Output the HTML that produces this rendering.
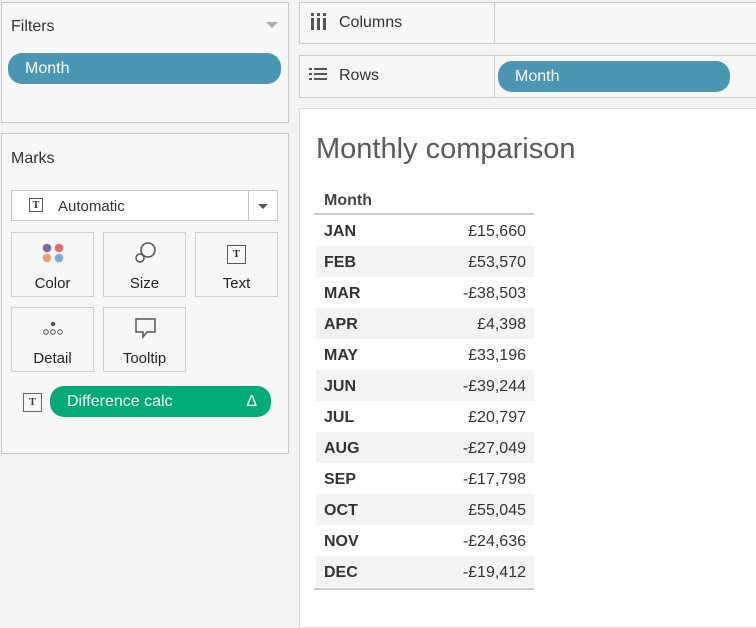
<!DOCTYPE html><html><head><style>
body{margin:0;width:756px;height:625px;background:#f3f3f3;font-family:"Liberation Sans",sans-serif;position:relative;overflow:hidden;color:#333}
.a{position:absolute;box-sizing:border-box}
.box{border:1px solid #c9c9c9;background:#f7f7f7}
.pill{border-radius:14px;color:#fff;font-size:16px;line-height:28px;padding-left:17px}
.card{border:1px solid #cfcfcf;background:#f7f7f7;width:83px;height:65px;text-align:center;font-size:15px;color:#222}
.card span{position:absolute;left:0;right:0;top:42px}
.tr{position:absolute;left:316px;width:218px;height:31px;font-size:16px;color:#333;line-height:33px}
.tr b{position:absolute;left:8px;color:#333;font-weight:600}
.tr i{font-style:normal;position:absolute;right:8px}
.s{background:#f3f3f3}
.ti{position:absolute;border:1.5px solid #555;width:14px;height:14px;font:bold 10px "Liberation Serif",serif;text-align:center;line-height:14px;box-sizing:border-box}
</style></head><body>
<div class="a box" style="left:1px;top:2px;width:288px;height:121px"></div>
<div class="a" style="left:11px;top:18px;font-size:16px">Filters</div>
<div class="a" style="left:266px;top:22px;border:6px solid transparent;border-top:6px solid #aaa"></div>
<div class="a pill" style="left:8px;top:53px;width:273px;height:31px;background:#4a96b3;line-height:32px">Month</div>

<div class="a box" style="left:1px;top:133px;width:288px;height:321px"></div>
<div class="a" style="left:11px;top:150px;font-size:16px">Marks</div>
<div class="a" style="left:11px;top:190px;width:267px;height:31px;border:1px solid #c6c6c6;background:#fff"></div>
<div class="a" style="left:248px;top:190px;width:1px;height:31px;background:#c6c6c6"></div>
<div class="a" style="left:258px;top:204px;border:5px solid transparent;border-top:5px solid #555"></div>
<div class="ti" style="left:29px;top:198px">T</div>
<div class="a" style="left:58px;top:198px;font-size:15px">Automatic</div>

<div class="a card" style="left:11px;top:232px"><svg width="30" height="30" style="margin-top:6px"><circle cx="9" cy="9" r="4.3" fill="#7f6b9b"/><circle cx="21" cy="9" r="4.3" fill="#e8686e"/><circle cx="9" cy="19" r="4.3" fill="#eba074"/><circle cx="21" cy="19" r="4.3" fill="#7ea8d6"/></svg><span>Color</span></div>
<div class="a card" style="left:103px;top:232px"><svg width="30" height="30" style="margin-top:6px"><circle cx="18" cy="11" r="7" fill="none" stroke="#555" stroke-width="1.5"/><circle cx="10" cy="19" r="4" fill="#fff" stroke="#555" stroke-width="1.5"/></svg><span>Size</span></div>
<div class="a card" style="left:195px;top:232px"><div class="ti" style="left:31px;top:12px;width:19px;height:19px;line-height:17px">T</div><span>Text</span></div>
<div class="a card" style="left:11px;top:307px"><svg width="30" height="30" style="margin-top:6px"><circle cx="15" cy="10" r="2.2" fill="#555"/><circle cx="8" cy="18" r="2.3" fill="none" stroke="#555"/><circle cx="15" cy="18" r="2.3" fill="none" stroke="#555"/><circle cx="22" cy="18" r="2.3" fill="none" stroke="#555"/></svg><span>Detail</span></div>
<div class="a card" style="left:103px;top:307px"><svg width="30" height="30" style="margin-top:6px"><path d="M6 5H25V18H17L13 23V18H6Z" fill="none" stroke="#555" stroke-width="1.5"/></svg><span>Tooltip</span></div>
<div class="ti" style="left:23px;top:393px;width:19px;height:19px;line-height:17px;border-color:#666">T</div>
<div class="a pill" style="left:50px;top:386px;width:221px;height:31px;background:#00ab75;line-height:32px">Difference calc<span style="position:absolute;right:14px">Δ</span></div>

<div class="a box" style="left:299px;top:2px;width:460px;height:42px"></div>
<div class="a" style="left:494px;top:2px;width:1px;height:42px;background:#ccc"></div>
<svg class="a" style="left:310px;top:13px" width="22" height="18"><g fill="#555"><rect x="1" y="0" width="3" height="3"/><rect x="7" y="0" width="3" height="3"/><rect x="13" y="0" width="3" height="3"/><rect x="1" y="5" width="3" height="12"/><rect x="7" y="5" width="3" height="12"/><rect x="13" y="5" width="3" height="12"/></g></svg>
<div class="a" style="left:339px;top:14px;font-size:16px">Columns</div>
<div class="a box" style="left:299px;top:55px;width:460px;height:43px"></div>
<div class="a" style="left:494px;top:55px;width:1px;height:43px;background:#ccc"></div>
<svg class="a" style="left:308px;top:68px" width="22" height="14"><g fill="#555"><rect x="1" y="0" width="3" height="2"/><rect x="6" y="0" width="13" height="2"/><rect x="1" y="5" width="3" height="2"/><rect x="6" y="5" width="13" height="2"/><rect x="1" y="10" width="3" height="2"/><rect x="6" y="10" width="13" height="2"/></g></svg>
<div class="a" style="left:339px;top:67px;font-size:16px">Rows</div>
<div class="a pill" style="left:498px;top:61px;width:232px;height:31px;background:#4a96b3;line-height:32px">Month</div>

<div class="a" style="left:299px;top:108px;width:460px;height:520px;background:#fff;border:1px solid #ddd"></div>
<div class="a" style="left:316px;top:133px;font-size:29px;color:#5a5a5a">Monthly comparison</div>
<div class="a" style="left:324px;top:192px;font-size:16px;font-weight:bold;color:#444">Month</div>
<div class="a" style="left:314px;top:213px;width:220px;height:2px;background:#ccc"></div>
<div class="tr" style="top:215px"><b>JAN</b><i>£15,660</i></div>
<div class="tr s" style="top:246px"><b>FEB</b><i>£53,570</i></div>
<div class="tr" style="top:277px"><b>MAR</b><i>-£38,503</i></div>
<div class="tr s" style="top:308px"><b>APR</b><i>£4,398</i></div>
<div class="tr" style="top:339px"><b>MAY</b><i>£33,196</i></div>
<div class="tr s" style="top:370px"><b>JUN</b><i>-£39,244</i></div>
<div class="tr" style="top:401px"><b>JUL</b><i>£20,797</i></div>
<div class="tr s" style="top:432px"><b>AUG</b><i>-£27,049</i></div>
<div class="tr" style="top:463px"><b>SEP</b><i>-£17,798</i></div>
<div class="tr s" style="top:494px"><b>OCT</b><i>£55,045</i></div>
<div class="tr" style="top:525px"><b>NOV</b><i>-£24,636</i></div>
<div class="tr s" style="top:556px"><b>DEC</b><i>-£19,412</i></div>
<div class="a" style="left:314px;top:588px;width:220px;height:2px;background:#ccc"></div>
</body></html>
